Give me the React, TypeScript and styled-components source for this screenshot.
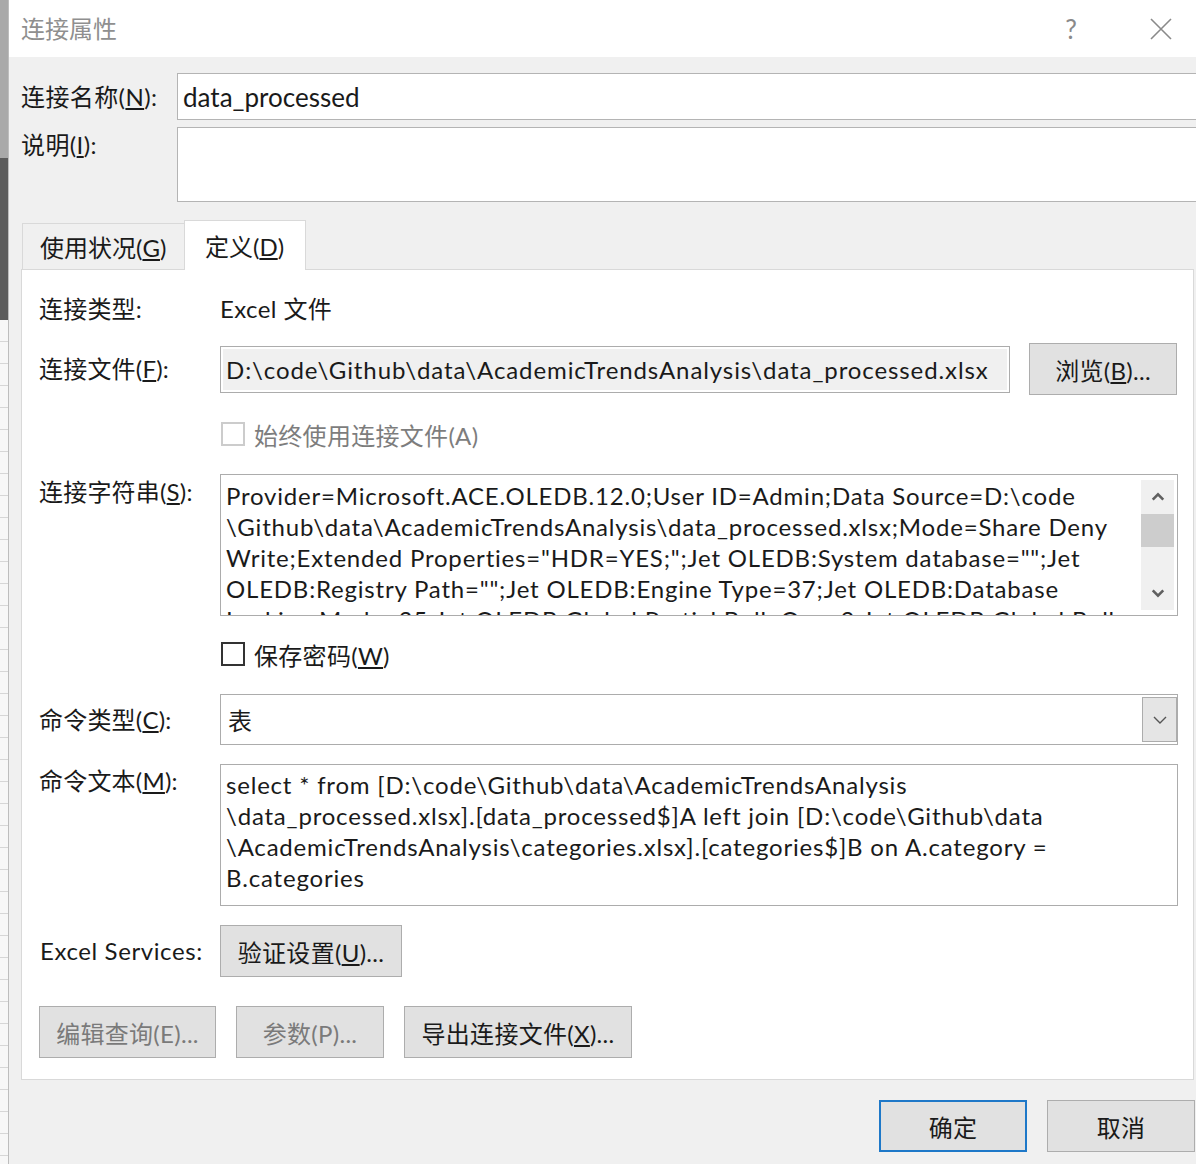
import React from "react"
import styled, { createGlobalStyle } from "styled-components"

const GlobalStyle = createGlobalStyle`
  html, body {
    margin: 0;
    padding: 0;
    background: #f0f0f0;
  }
  body {
    font-family: Lato, "Noto Sans CJK SC", sans-serif;
    color: #1a1a1a;
  }
  * {
    box-sizing: border-box;
  }
`

const Page = styled.div`
  display: flex;
  width: 1196px;
  height: 1164px;
  overflow: hidden;
`

// Sliver of the Excel window peeking out behind the dialog
const Backdrop = styled.div`
  width: 9px;
  flex-shrink: 0;
  display: flex;
  flex-direction: column;
  border-right: 1px solid #bdbdbd;
`

const BackdropPart = styled.div<{ $h: number; $bg: string }>`
  height: ${(p) => p.$h}px;
  flex-shrink: 0;
  background: ${(p) => p.$bg};
`

const Grid = styled.div`
  flex: 1;
  background-color: #f7f7f7;
  background-image: repeating-linear-gradient(
    to bottom,
    transparent 0,
    transparent 21px,
    #d6d6d6 21px,
    #d6d6d6 22px
  );
`

const Dialog = styled.div`
  flex: 1;
  display: flex;
  flex-direction: column;
  background: #f0f0f0;
  min-width: 0;
`

const TitleBar = styled.div`
  height: 57px;
  flex-shrink: 0;
  background: #fff;
  display: flex;
  align-items: center;
  padding-left: 12px;
`

const Title = styled.div`
  flex: 1;
  font-size: 24px;
  color: #8f8f8f;
  padding-bottom: 3px;
`

const TitleButton = styled.div<{ $w: number }>`
  width: ${(p) => p.$w}px;
  height: 57px;
  display: flex;
  align-items: center;
  justify-content: center;
  color: #8a8a8a;
  font-size: 26px;
`

const Body = styled.div`
  flex: 1;
  display: flex;
  flex-direction: column;
  padding: 16px 0 0 12px;
  min-height: 0;
`

const TopRow = styled.div<{ $mt?: number }>`
  display: grid;
  grid-template-columns: 156px 1fr;
  margin-top: ${(p) => p.$mt ?? 0}px;
  margin-right: -3px;
`

const TopLabel = styled.div<{ $top?: boolean }>`
  font-size: 24px;
  line-height: 36px;
  letter-spacing: 0.4px;
  align-self: ${(p) => (p.$top ? "start" : "center")};
`

const TextBox = styled.div<{ $h: number }>`
  height: ${(p) => p.$h}px;
  background: #fff;
  border: 1px solid #b4b4b4;
  font-size: 26px;
  display: flex;
  align-items: center;
  padding-left: 5px;
`

const Tabs = styled.div`
  display: flex;
  align-items: flex-end;
  margin-top: 18px;
  margin-left: 1px;
  position: relative;
  z-index: 1;
`

const Tab = styled.div<{ $active?: boolean; $w: number }>`
  width: ${(p) => p.$w}px;
  height: ${(p) => (p.$active ? 50 : 46)}px;
  padding-left: ${(p) => (p.$active ? 20 : 17)}px;
  display: flex;
  align-items: center;
  font-size: 24px;
  background: ${(p) => (p.$active ? "#fff" : "#f0f0f0")};
  border: 1px solid #d9d9d9;
  border-bottom: none;
  margin-bottom: ${(p) => (p.$active ? -1 : 0)}px;
  margin-left: ${(p) => (p.$active ? -1 : 0)}px;
`

const Panel = styled.div`
  margin-right: 2px;
  background: #fff;
  border: 1px solid #d9d9d9;
  padding: 19px 15px 21px 17px;
  display: flex;
  flex-direction: column;
`

const Row = styled.div<{ $mt?: number; $align?: string }>`
  display: grid;
  grid-template-columns: 181px 1fr;
  align-items: ${(p) => p.$align ?? "center"};
  margin-top: ${(p) => p.$mt ?? 0}px;
`

const Label = styled.div<{ $pt?: number; $latin?: boolean }>`
  font-size: 24px;
  line-height: 32px;
  padding-top: ${(p) => p.$pt ?? 0}px;
  padding-left: ${(p) => (p.$latin ? 1 : 0)}px;
  letter-spacing: ${(p) => (p.$latin ? 0.6 : 0.2)}px;
  white-space: nowrap;
`

const Value = styled.div`
  font-size: 24px;
  line-height: 40px;
  letter-spacing: 0.4px;
`

const Inline = styled.div`
  display: flex;
  align-items: center;
  gap: 19px;
`

const ReadOnlyBox = styled.div`
  width: 790px;
  height: 47px;
  border: 1px solid #acacac;
  background: #fff;
  padding: 2px;
`

const ReadOnlyInner = styled.div`
  height: 100%;
  background: #f0f0f0;
  display: flex;
  align-items: center;
  padding-left: 3px;
  font-size: 24px;
  letter-spacing: 0.9px;
  white-space: nowrap;
  overflow: hidden;
`

const Button = styled.div<{ $w: number; $disabled?: boolean; $default?: boolean }>`
  width: ${(p) => p.$w}px;
  height: 52px;
  flex-shrink: 0;
  display: flex;
  align-items: center;
  justify-content: center;
  background: #e1e1e1;
  border: ${(p) => (p.$default ? "2px solid #1e78c8" : "1px solid #adadad")};
  color: ${(p) => (p.$disabled ? "#7a7a7a" : "#1a1a1a")};
  font-size: 24px;
  letter-spacing: 0.3px;
  white-space: nowrap;
`

const CheckLine = styled.div<{ $disabled?: boolean }>`
  display: flex;
  align-items: center;
  gap: 9px;
  height: 30px;
  padding-left: 1px;
  font-size: 24px;
  letter-spacing: 0.3px;
  color: ${(p) => (p.$disabled ? "#7d7d7d" : "#1a1a1a")};
`

const CheckBox = styled.div<{ $disabled?: boolean }>`
  width: 24px;
  height: 24px;
  flex-shrink: 0;
  border: 2px solid ${(p) => (p.$disabled ? "#cccccc" : "#333333")};
  background: #fff;
`

const MultiLine = styled.div<{ $pt: number }>`
  position: relative;
  height: 142px;
  border: 1px solid #acacac;
  background: #fff;
  padding: ${(p) => p.$pt}px 40px 0 5px;
  overflow: hidden;
`

const TextLines = styled.div<{ $clip?: number }>`
  font-size: 24px;
  line-height: 31px;
  letter-spacing: 0.8px;
  white-space: nowrap;
  height: ${(p) => (p.$clip ? `${p.$clip}px` : "auto")};
  overflow: hidden;
`

// Vertical scroll bar that sits over the right edge of the text
const ScrollBar = styled.div`
  position: absolute;
  top: 5px;
  right: 3px;
  bottom: 5px;
  width: 33px;
  background: #f0f0f0;
  display: flex;
  flex-direction: column;
  align-items: center;
`

const ScrollArrow = styled.div`
  height: 34px;
  width: 100%;
  display: flex;
  align-items: center;
  justify-content: center;
`

const ScrollThumb = styled.div`
  width: 100%;
  height: 33px;
  background: #cdcdcd;
`

const ScrollGap = styled.div`
  flex: 1;
`

const Select = styled.div`
  position: relative;
  height: 51px;
  border: 1px solid #acacac;
  background: #fff;
  display: flex;
  align-items: center;
  padding-left: 7px;
  font-size: 24px;
`

const SelectButton = styled.div`
  position: absolute;
  top: 2px;
  right: 0;
  bottom: 2px;
  width: 35px;
  background: #e5e5e5;
  border: 1px solid #acacac;
  display: flex;
  align-items: center;
  justify-content: center;
`

const ButtonBar = styled.div<{ $mt: number }>`
  display: flex;
  gap: 20px;
  margin-top: ${(p) => p.$mt}px;
`

const Footer = styled.div`
  display: flex;
  justify-content: flex-end;
  gap: 20px;
  margin-top: 20px;
  padding-right: 1px;
`

const Chevron = ({ up, thin }: { up?: boolean; thin?: boolean }) => (
  <svg width={thin ? 16 : 14} height={10} viewBox="0 0 16 10">
    <path
      d={up ? "M2 8 L8 2 L14 8" : "M2 2 L8 8 L14 2"}
      fill="none"
      stroke={thin ? "#555" : "#606060"}
      strokeWidth={thin ? 1.4 : 3}
    />
  </svg>
)

const connLines = [
  "Provider=Microsoft.ACE.OLEDB.12.0;User ID=Admin;Data Source=D:\\code",
  "\\Github\\data\\AcademicTrendsAnalysis\\data_processed.xlsx;Mode=Share Deny",
  'Write;Extended Properties="HDR=YES;";Jet OLEDB:System database="";Jet',
  'OLEDB:Registry Path="";Jet OLEDB:Engine Type=37;Jet OLEDB:Database',
  "Locking Mode=35;Jet OLEDB:Global Partial Bulk Ops=2;Jet OLEDB:Global Bulk",
]

const sqlLines = [
  "select * from [D:\\code\\Github\\data\\AcademicTrendsAnalysis",
  "\\data_processed.xlsx].[data_processed$]A left join [D:\\code\\Github\\data",
  "\\AcademicTrendsAnalysis\\categories.xlsx].[categories$]B on A.category =",
  "B.categories",
]

export default function App() {
  return (
    <Page>
      <GlobalStyle />
      <Backdrop>
        <BackdropPart $h={158} $bg="#a9a9a9" />
        <BackdropPart $h={162} $bg="#5c5c5c" />
        <Grid />
      </Backdrop>
      <Dialog>
        <TitleBar>
          <Title>连接属性</Title>
          <TitleButton $w={110}>?</TitleButton>
          <TitleButton $w={70}>
            <svg width="22" height="22" viewBox="0 0 22 22">
              <path d="M1 1 L21 21 M21 1 L1 21" stroke="#8a8a8a" strokeWidth="1.6" />
            </svg>
          </TitleButton>
        </TitleBar>
        <Body>
          <TopRow>
            <TopLabel>
              连接名称(<u>N</u>):
            </TopLabel>
            <TextBox $h={47}>data_processed</TextBox>
          </TopRow>
          <TopRow $mt={7}>
            <TopLabel $top>
              说明(<u>I</u>):
            </TopLabel>
            <TextBox $h={75} />
          </TopRow>

          <Tabs>
            <Tab $w={163}>
              <span>
                使用状况(<u>G</u>)
              </span>
            </Tab>
            <Tab $w={122} $active>
              <span>
                定义(<u>D</u>)
              </span>
            </Tab>
          </Tabs>
          <Panel>
            <Row>
              <Label>连接类型:</Label>
              <Value>Excel 文件</Value>
            </Row>
            <Row $mt={14}>
              <Label>
                连接文件(<u>F</u>):
              </Label>
              <Inline>
                <ReadOnlyBox>
                  <ReadOnlyInner>
                    D:\code\Github\data\AcademicTrendsAnalysis\data_processed.xlsx
                  </ReadOnlyInner>
                </ReadOnlyBox>
                <Button $w={148}>
                  <span>
                    浏览(<u>B</u>)...
                  </span>
                </Button>
              </Inline>
            </Row>
            <Row $mt={24}>
              <div />
              <CheckLine $disabled>
                <CheckBox $disabled />
                <span>始终使用连接文件(A)</span>
              </CheckLine>
            </Row>
            <Row $mt={25} $align="start">
              <Label $pt={2}>
                连接字符串(<u>S</u>):
              </Label>
              <MultiLine $pt={5}>
                <TextLines $clip={135}>
                  {connLines.map((l) => (
                    <div key={l}>{l}</div>
                  ))}
                </TextLines>
                <ScrollBar>
                  <ScrollArrow>
                    <Chevron up />
                  </ScrollArrow>
                  <ScrollThumb />
                  <ScrollGap />
                  <ScrollArrow>
                    <Chevron />
                  </ScrollArrow>
                </ScrollBar>
              </MultiLine>
            </Row>
            <Row $mt={23}>
              <div />
              <CheckLine>
                <CheckBox />
                <span>
                  保存密码(<u>W</u>)
                </span>
              </CheckLine>
            </Row>
            <Row $mt={25}>
              <Label>
                命令类型(<u>C</u>):
              </Label>
              <Select>
                表
                <SelectButton>
                  <Chevron thin />
                </SelectButton>
              </Select>
            </Row>
            <Row $mt={19} $align="start">
              <Label $pt={1}>
                命令文本(<u>M</u>):
              </Label>
              <MultiLine $pt={4}>
                <TextLines>
                  {sqlLines.map((l) => (
                    <div key={l}>{l}</div>
                  ))}
                </TextLines>
              </MultiLine>
            </Row>
            <Row $mt={19}>
              <Label $latin>Excel Services:</Label>
              <div>
                <Button $w={182}>
                  <span>
                    验证设置(<u>U</u>)...
                  </span>
                </Button>
              </div>
            </Row>
            <ButtonBar $mt={29}>
              <Button $w={177} $disabled>
                编辑查询(E)...
              </Button>
              <Button $w={148} $disabled>
                参数(P)...
              </Button>
              <Button $w={228}>
                <span>
                  导出连接文件(<u>X</u>)...
                </span>
              </Button>
            </ButtonBar>
          </Panel>
          <Footer>
            <Button $w={148} $default>
              确定
            </Button>
            <Button $w={148}>取消</Button>
          </Footer>
        </Body>
      </Dialog>
    </Page>
  )
}
